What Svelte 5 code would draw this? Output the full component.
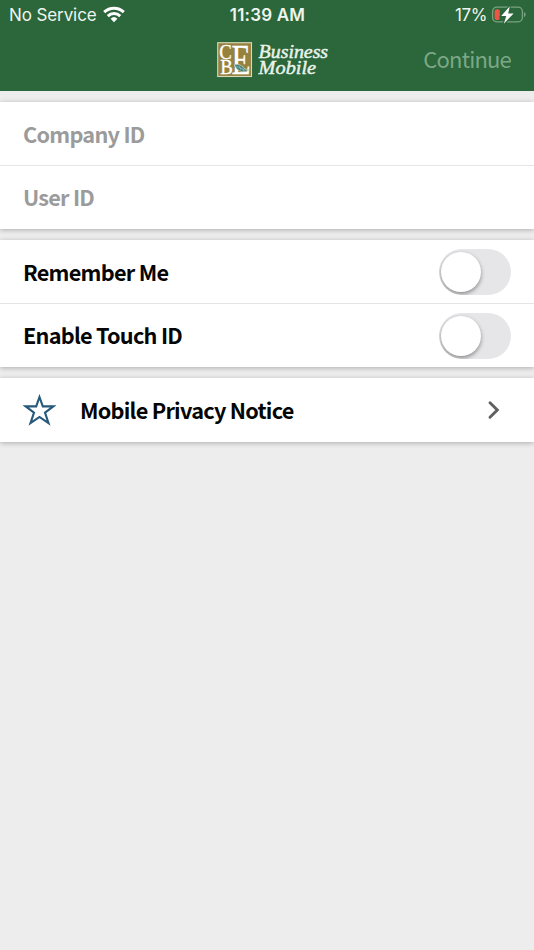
<script>
  const fields = [
    { id: 'company', label: 'Company ID' },
    { id: 'user', label: 'User ID' },
  ];

  let values = $state({ company: '', user: '' });

  let options = $state([
    { label: 'Remember Me', on: false },
    { label: 'Enable Touch ID', on: false },
  ]);
</script>

<div class="screen">
  <header>
    <div class="status-bar">
      <div class="carrier">
        <span class="service">No Service</span>
        <svg class="wifi" width="22" height="17" viewBox="0 0 22 17">
          <g fill="none" stroke="#fff" stroke-width="3">
            <path d="M1.2 6.2a14.2 14.2 0 0 1 19.6 0" />
            <path d="M4.8 10.1a9 9 0 0 1 12.4 0" />
          </g>
          <path d="M11 16.2 7.6 12.7a5 5 0 0 1 6.8 0z" fill="#fff" />
        </svg>
      </div>
      <span class="time">11:39 AM</span>
      <div class="power">
        <span class="percent">17%</span>
        <svg class="battery" width="35" height="20" viewBox="0 0 35 20">
          <rect x="1.6" y="2.1" width="29.8" height="14.8" rx="4.3" fill="none" stroke="#79a482" stroke-width="1.3" />
          <path d="M33 7v5.2q1.7-.7 1.7-2.6T33 7z" fill="#79a482" />
          <rect x="3.6" y="4.2" width="5.2" height="10.8" rx="2.1" fill="#ea5545" />
          <path d="M18.8 1.2 10.2 11h5.1l-2.5 7.7L22.6 8.5h-5.4z" fill="#fff" stroke="#2c663b" stroke-width="2.4" paint-order="stroke" />
        </svg>
      </div>
    </div>

    <div class="nav-bar">
      <div class="brand">
        <svg class="mark" width="36" height="36" viewBox="0 0 36 36">
          <rect x=".7" y=".7" width="33.8" height="33.8" fill="#96823f" stroke="#d9d8ba" stroke-width="1.1" />
          <g class="letters">
            <text x="2.2" y="17.3" font-size="21" textLength="12.5" lengthAdjust="spacingAndGlyphs">C</text>
            <text x="3.2" y="32" font-size="20" textLength="12.5" lengthAdjust="spacingAndGlyphs">B</text>
            <text x="14.4" y="32" font-size="43" textLength="19" lengthAdjust="spacingAndGlyphs">E</text>
          </g>
          <path d="M17.3 22.7c4-1.5 9 1.6 10.6 4.2l4.3 1.2-3.4 1.1c-4.7 1.5-9.1-1-11.5-6.5z" fill="#3d8078" stroke="#d3ddcd" stroke-width=".7" />
          <path d="m19 24.1 9 4.1m-5.5-4.3 1.3 4m2-2.4.8 3.5" stroke="#a9c8bd" stroke-width=".6" fill="none" />
        </svg>
        <svg class="wordmark" width="74" height="36" viewBox="0 0 74 36">
          <text x=".6" y="15.9" textLength="69.5" lengthAdjust="spacingAndGlyphs">Business</text>
          <text x=".6" y="32.2" textLength="57.5" lengthAdjust="spacingAndGlyphs">Mobile</text>
        </svg>
      </div>
      <button class="continue" disabled>Continue</button>
    </div>
  </header>

  <main>
    <section class="card">
      {#each fields as field}
        <div class="row">
          <input type="text" placeholder={field.label} aria-label={field.label} bind:value={values[field.id]} />
        </div>
      {/each}
    </section>

    <section class="card">
      {#each options as option}
        <div class="row">
          <span class="label">{option.label}</span>
          <button
            class="switch"
            class:on={option.on}
            role="switch"
            aria-checked={option.on}
            aria-label={option.label}
            onclick={() => (option.on = !option.on)}
          >
            <span class="knob"></span>
          </button>
        </div>
      {/each}
    </section>

    <section class="card">
      <div class="row">
        <svg class="star" width="33" height="32" viewBox="0 0 33 32">
          <path
            d="M16.5 3 19.8 12.4 30.3 12.4 22 18.7 25.5 29.2 16.5 23 7.5 29.2 11 18.7 2.7 12.4 13.2 12.4z"
            fill="none"
            stroke="#26597a"
            stroke-width="2.1"
          />
        </svg>
        <span class="label">Mobile Privacy Notice</span>
        <svg class="chevron" width="14" height="20" viewBox="0 0 14 20">
          <path d="m3 2.8 7.3 7.2L3 17.2" fill="none" stroke="#606060" stroke-width="2.9" stroke-linecap="round" />
        </svg>
      </div>
    </section>
  </main>
</div>

<style>
  :global(body) {
    background: #ededed;
  }

  .screen {
    min-height: 950px;
    overflow: hidden;
    background: #ededed;
    color: #050505;
    font-family: 'Noto Sans CJK JP', 'Noto Sans', sans-serif;
  }

  header {
    height: 91px;
    background: #2c663b;
    color: #fff;
  }

  .status-bar {
    display: grid;
    grid-template-columns: 1fr auto 1fr;
    align-items: center;
    height: 29px;
    padding: 0 8px 0 9px;
    font-family: Inter, sans-serif;
    font-size: 17px;
    color: #eef5ef;
  }

  .carrier,
  .power {
    display: flex;
    align-items: center;
  }

  .service {
    letter-spacing: -0.1px;
  }

  .wifi {
    margin-left: 6px;
  }

  .time {
    font-weight: 600;
    letter-spacing: 0.2px;
  }

  .power {
    justify-content: flex-end;
  }

  .percent {
    margin-right: 4px;
    letter-spacing: -0.4px;
  }

  .nav-bar {
    display: grid;
    grid-template-columns: 1fr auto 1fr;
    align-items: center;
    height: 62px;
    padding: 0 23px 0 24px;
  }

  .brand {
    display: flex;
    grid-column: 2;
    gap: 5px;
    margin-left: 14px;
  }

  .mark {
    overflow: visible;
  }

  .letters {
    font-family: 'Liberation Serif', serif;
    fill: #fff;
    stroke: #fff;
    stroke-width: 0.35;
  }

  .wordmark text {
    font-family: 'Liberation Serif', serif;
    font-size: 18.5px;
    font-style: italic;
    fill: #e9f3ea;
    stroke: #e9f3ea;
    stroke-width: 0.45;
  }

  button {
    padding: 0;
    border: 0;
    background: none;
    font: inherit;
  }

  .continue {
    justify-self: end;
    padding-bottom: 4px;
    color: #7ba886;
    font-size: 22px;
    line-height: 32px;
    letter-spacing: -0.8px;
  }

  .card {
    margin-top: 11px;
    background: #fff;
    box-shadow: 0 1px 5px rgba(0, 0, 0, 0.28);
  }

  .row {
    display: flex;
    align-items: center;
    box-sizing: border-box;
    height: 63.5px;
    padding: 0 23px;
  }

  .row:not(:only-child):first-child {
    height: 63px;
  }

  .row + .row {
    height: 64px;
    border-top: 1px solid #e5e5e5;
  }

  .label,
  input {
    flex: 1;
    padding: 0;
    font-family: inherit;
    font-size: 21.7px;
    font-weight: 700;
    line-height: 32px;
    letter-spacing: -0.76px;
  }

  .row + .row .label,
  .row + .row input {
    padding-bottom: 2px;
  }

  input {
    min-width: 0;
    border: 0;
    outline: 0;
    background: none;
    color: #050505;
  }

  input::placeholder {
    color: #9b9b9b;
    opacity: 1;
  }

  .switch {
    width: 72.5px;
    height: 46px;
    margin-top: 1px;
    padding: 2.5px;
    border-radius: 23px;
    background: #e6e6e8;
    overflow: hidden;
  }

  .row + .row .switch {
    margin-top: 0;
  }

  .knob {
    display: block;
    width: 40px;
    height: 40px;
    border-radius: 50%;
    background: #fff;
    box-shadow: 0 2px 4px rgba(0, 0, 0, 0.4);
    transition: transform 0.2s;
  }

  .switch.on {
    background: #2c663b;
  }

  .switch.on .knob {
    transform: translateX(28px);
  }

  .star {
    margin-right: 24px;
  }

  .chevron {
    margin-right: 10px;
  }
</style>
